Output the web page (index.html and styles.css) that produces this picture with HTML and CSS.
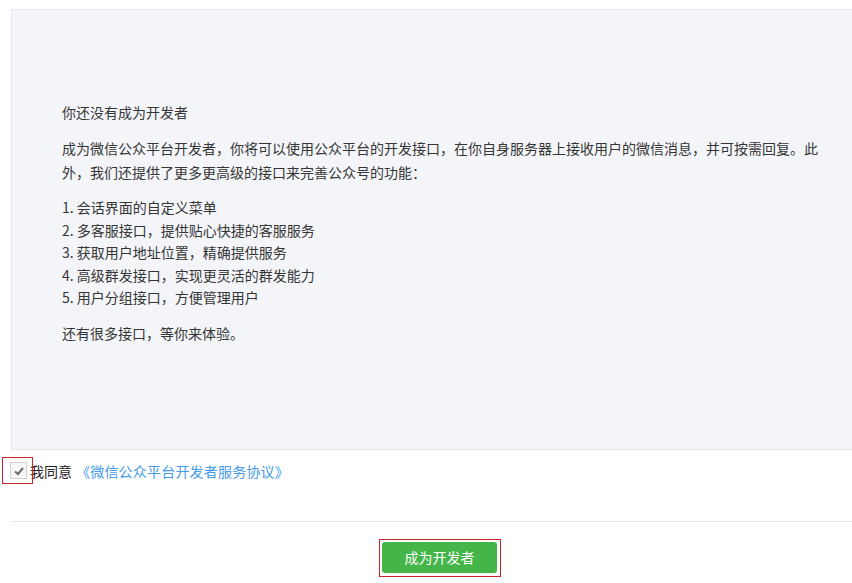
FILE: index.html
```html
<!DOCTYPE html>
<html lang="zh-CN">
<head>
<meta charset="utf-8">
<title>成为开发者</title>
<link rel="stylesheet" href="styles.css">
</head>
<body>
<div class="page">
  <div class="panel">
    <h3 class="title">你还没有成为开发者</h3>
    <p class="desc">成为微信公众平台开发者，你将可以使用公众平台的开发接口，在你自身服务器上接收用户的微信消息，并可按需回复。此外，我们还提供了更多更高级的接口来完善公众号的功能：</p>
    <ul class="features">
      <li>1. 会话界面的自定义菜单</li>
      <li>2. 多客服接口，提供贴心快捷的客服服务</li>
      <li>3. 获取用户地址位置，精确提供服务</li>
      <li>4. 高级群发接口，实现更灵活的群发能力</li>
      <li>5. 用户分组接口，方便管理用户</li>
    </ul>
    <p class="more">还有很多接口，等你来体验。</p>
  </div>
  <div class="agree">
    <span class="check">
      <svg width="16" height="16" viewBox="0 0 16 16"><polyline points="4,8.5 7,11 12,5" fill="none" stroke="#6b6b6b" stroke-width="2"/></svg>
    </span>
    <span class="agree-text">我同意</span>
    <a class="agree-link" href="#">《微信公众平台开发者服务协议》</a>
  </div>
  <div class="divider"></div>
  <div class="footer">
    <span class="btn-wrap"><button class="btn" type="button">成为开发者</button></span>
  </div>
</div>
</body>
</html>
```

FILE: styles.css
```css
html, body {
  margin: 0;
  padding: 0;
  overflow: hidden;
  background: #fff;
}
body {
  font-family: "Noto Sans CJK SC", "Microsoft YaHei", sans-serif;
  font-size: 14px;
  color: #353535;
}
.page {
  width: 857px;
  margin-left: 11px;
}
.panel {
  margin-top: 9px;
  border: 1px solid #e7e7eb;
  background: #f4f5f9;
  padding: 90px 45px 104px 50px;
}
.title {
  margin: 0;
  font-size: 14px;
  font-weight: normal;
  line-height: 24px;
}
.desc {
  margin: 12px 0 0;
  line-height: 24px;
}
.features {
  list-style: none;
  margin: 12px 0 0;
  padding: 0;
  line-height: 22.5px;
}
.more {
  margin: 12px 0 0;
  line-height: 24px;
}
.agree {
  display: flex;
  align-items: center;
  height: 24px;
  margin-top: 9px;
  line-height: 24px;
}
.check {
  position: relative;
  display: block;
  width: 15px;
  height: 15px;
  border: 1px solid #d2d2d2;
  background: #f7f7f7;
  box-sizing: content-box;
  margin-left: -1px;
}
.check svg {
  display: block;
  margin: -0.5px;
}
.check::after {
  content: "";
  position: absolute;
  left: -9px;
  top: -6px;
  right: -7px;
  bottom: -6px;
  border: 1.5px solid #c9242d;
}
.agree-text {
  margin-left: 3px;
  color: #222;
}
.agree-link {
  margin-left: 4px;
  color: #459ae9;
  text-decoration: none;
  letter-spacing: 0.2px;
}
.divider {
  margin-top: 38px;
  height: 1px;
  background: #e7e7eb;
}
.footer {
  display: flex;
  justify-content: center;
  margin-top: 17px;
}
.btn-wrap {
  display: block;
  border: 1.5px solid #c9242d;
  padding: 2.5px;
}
.btn {
  display: block;
  width: 115px;
  height: 31px;
  border: 0;
  border-radius: 3px;
  background: #44b549;
  color: #fff;
  font-family: "Noto Sans CJK SC", "Microsoft YaHei", sans-serif;
  font-size: 14px;
  padding: 0;
  line-height: 31px;
}
```
